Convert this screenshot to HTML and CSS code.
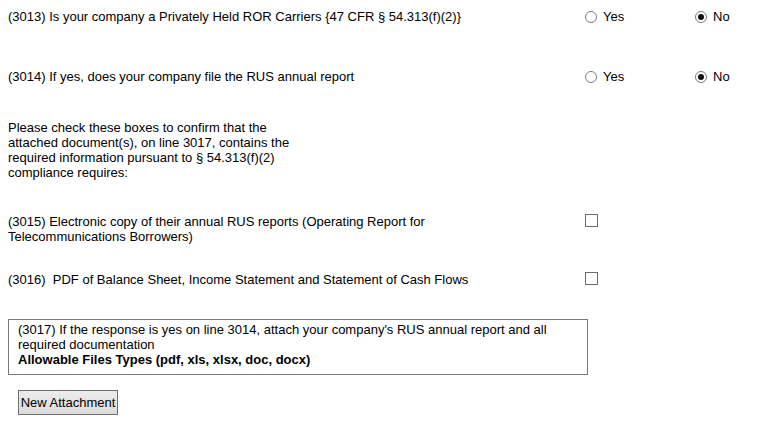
FILE: index.html
```html
<!DOCTYPE html>
<html lang="en">
<head>
    <meta charset="UTF-8">
    <meta name="viewport" content="width=device-width, initial-scale=1.0">
    <title>RUS Compliance</title>
    <link rel="stylesheet" href="styles.css">
</head>
<body>
    <div class="form">
        <div class="row row-first">
            <div class="question">(3013) Is your company a Privately Held ROR Carriers {47 CFR § 54.313(f)(2)}</div>
            <label class="choice"><input type="radio" name="q3013" value="yes"> Yes</label>
            <label class="choice"><input type="radio" name="q3013" value="no" checked> No</label>
        </div>

        <div class="row row-second">
            <div class="question">(3014) If yes, does your company file the RUS annual report</div>
            <label class="choice"><input type="radio" name="q3014" value="yes"> Yes</label>
            <label class="choice"><input type="radio" name="q3014" value="no" checked> No</label>
        </div>

        <div class="instructions">
            Please check these boxes to confirm that the attached document(s), on line 3017, contains the required information pursuant to § 54.313(f)(2) compliance requires:
        </div>

        <div class="row row-check">
            <div class="question wrap">(3015) Electronic copy of their annual RUS reports (Operating Report for Telecommunications Borrowers)</div>
            <input type="checkbox" name="q3015">
        </div>

        <div class="row row-check2">
            <div class="question">(3016)&nbsp; PDF of Balance Sheet, Income Statement and Statement of Cash Flows</div>
            <input type="checkbox" name="q3016">
        </div>

        <div class="attach-box">
            (3017) If the response is yes on line 3014, attach your company's RUS annual report and all required documentation
            <div class="file-types">Allowable Files Types (pdf, xls, xlsx, doc, docx)</div>
        </div>

        <button class="attach-button">New Attachment</button>
    </div>
</body>
</html>
```

FILE: styles.css
```css
body {
    font-family: "Liberation Sans", Arial, sans-serif;
    font-size: 13px;
    line-height: 15px;
    color: #000;
    background-color: #fff;
    margin: 0;
    padding: 0;
}
.form {
    padding: 0 8px;
}
.row {
    display: flex;
    align-items: flex-start;
}
.row-first {
    padding-top: 9px;
}
.row-second {
    margin-top: 45px;
}
.row-check {
    margin-top: 34px;
}
.row-check2 {
    margin-top: 28px;
}
.question {
    width: 577px;
    flex-shrink: 0;
}
.question.wrap {
    padding-right: 130px;
    box-sizing: border-box;
}
.choice {
    width: 110px;
    flex-shrink: 0;
    display: flex;
    align-items: center;
}
.choice + .choice {
    width: auto;
}
.instructions {
    width: 290px;
    margin-top: 36px;
}
input[type="radio"] {
    appearance: none;
    -webkit-appearance: none;
    width: 12px;
    height: 12px;
    margin: 0 6px 0 0;
    border: 1px solid #7a7a7a;
    border-radius: 50%;
    background-color: #fff;
    box-sizing: border-box;
    display: flex;
    align-items: center;
    justify-content: center;
}
input[type="radio"]:checked::after {
    content: "";
    width: 6px;
    height: 6px;
    border-radius: 50%;
    background-color: #111;
}
input[type="checkbox"] {
    appearance: none;
    -webkit-appearance: none;
    width: 13px;
    height: 13px;
    margin: 0;
    flex-shrink: 0;
    border: 1px solid #6d6d6d;
    background-color: #fff;
    box-sizing: border-box;
}
.attach-box {
    width: 580px;
    box-sizing: border-box;
    margin-top: 32px;
    border: 1px solid #7a7a7a;
    padding: 2px 9px 7px 9px;
}
.file-types {
    font-weight: bold;
}
.attach-button {
    font-family: "Liberation Sans", Arial, sans-serif;
    font-size: 13px;
    color: #000;
    white-space: nowrap;
    margin: 15px 0 0 10px;
    width: 100px;
    height: 25px;
    padding: 0;
    border: 1px solid #707070;
    border-radius: 0;
    background: linear-gradient(#ececec, #dcdcdc);
    cursor: pointer;
}
```
